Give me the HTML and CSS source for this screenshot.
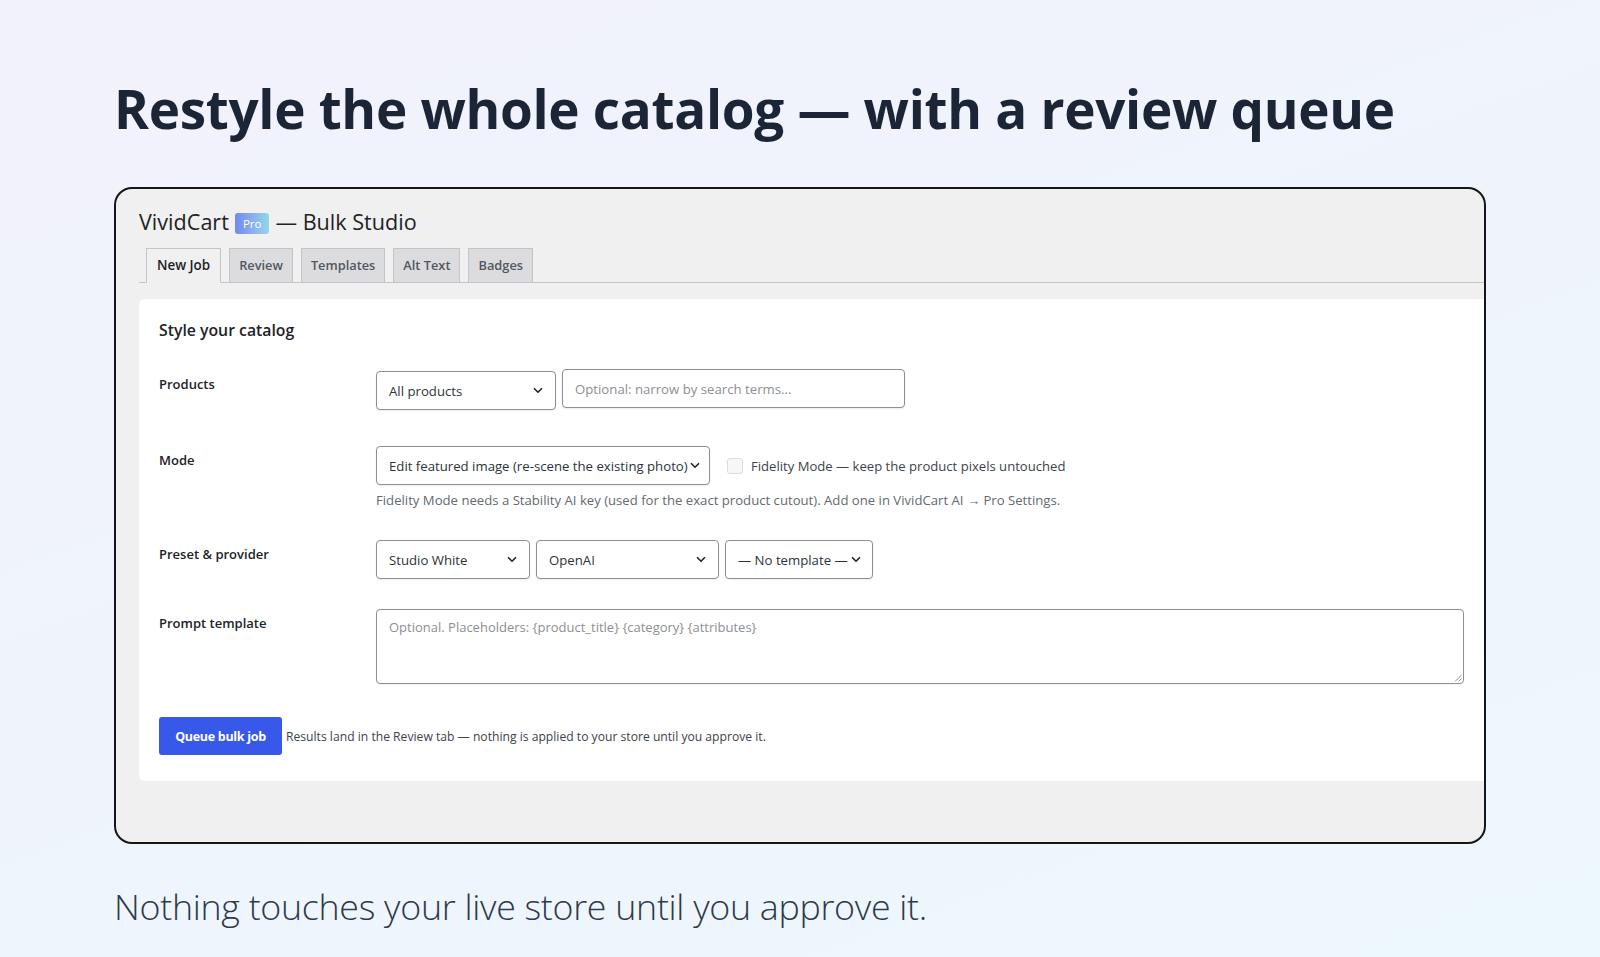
FILE: index.html
```html
<!DOCTYPE html>
<html lang="en">
<head>
<meta charset="utf-8">
<title>VividCart — Bulk Studio</title>
<link rel="stylesheet" href="styles.css">
</head>
<body>
<main class="page">
  <h1 class="hero-title">Restyle the whole catalog — with a review queue</h1>

  <section class="window">
    <h2 class="app-title">VividCart <span class="pro-badge">Pro</span> — Bulk Studio</h2>

    <nav class="tabs">
      <span class="tab tab-active">New Job</span>
      <span class="tab">Review</span>
      <span class="tab">Templates</span>
      <span class="tab">Alt Text</span>
      <span class="tab">Badges</span>
    </nav>

    <div class="panel">
      <h3 class="panel-title">Style your catalog</h3>

      <div class="row row-products">
        <div class="label">Products</div>
        <div class="controls">
          <div class="select select-products">
            <span class="select-text">All products</span>
            <svg class="chev" width="10" height="7" viewBox="0 0 10 7"><path d="M1 1.2 5 5.2 9 1.2" fill="none" stroke="#1d2327" stroke-width="1.6"/></svg>
          </div>
          <div class="input input-search">Optional: narrow by search terms...</div>
        </div>
      </div>

      <div class="row row-mode">
        <div class="label">Mode</div>
        <div class="controls-col">
          <div class="controls">
            <div class="select select-mode">
              <span class="select-text">Edit featured image (re-scene the existing photo)</span>
              <svg class="chev" width="10" height="7" viewBox="0 0 10 7"><path d="M1 1.2 5 5.2 9 1.2" fill="none" stroke="#1d2327" stroke-width="1.6"/></svg>
            </div>
            <label class="check">
              <span class="checkbox"></span>
              <span class="check-text">Fidelity Mode — keep the product pixels untouched</span>
            </label>
          </div>
          <p class="hint">Fidelity Mode needs a Stability AI key (used for the exact product cutout). Add one in VividCart AI → Pro Settings.</p>
        </div>
      </div>

      <div class="row row-preset">
        <div class="label">Preset &amp; provider</div>
        <div class="controls">
          <div class="select select-preset">
            <span class="select-text">Studio White</span>
            <svg class="chev" width="10" height="7" viewBox="0 0 10 7"><path d="M1 1.2 5 5.2 9 1.2" fill="none" stroke="#1d2327" stroke-width="1.6"/></svg>
          </div>
          <div class="select select-provider">
            <span class="select-text">OpenAI</span>
            <svg class="chev" width="10" height="7" viewBox="0 0 10 7"><path d="M1 1.2 5 5.2 9 1.2" fill="none" stroke="#1d2327" stroke-width="1.6"/></svg>
          </div>
          <div class="select select-template">
            <span class="select-text">— No template —</span>
            <svg class="chev" width="10" height="7" viewBox="0 0 10 7"><path d="M1 1.2 5 5.2 9 1.2" fill="none" stroke="#1d2327" stroke-width="1.6"/></svg>
          </div>
        </div>
      </div>

      <div class="row row-prompt">
        <div class="label">Prompt template</div>
        <div class="textarea">
          <span class="placeholder">Optional. Placeholders: {product_title} {category} {attributes}</span>
          <svg class="grip" width="8" height="8" viewBox="0 0 8 8"><path d="M7.5 1 1 7.5M7.5 4.5 4.5 7.5" fill="none" stroke="#8c8f94" stroke-width="1"/></svg>
        </div>
      </div>

      <div class="actions">
        <button class="btn-primary" type="button">Queue bulk job</button>
        <span class="actions-note">Results land in the Review tab — nothing is applied to your store until you approve it.</span>
      </div>
    </div>
  </section>

  <p class="tagline">Nothing touches your live store until you approve it.</p>
</main>
</body>
</html>
```

FILE: styles.css
```css
html, body {
  margin: 0;
  padding: 0;
}

body {
  width: 1600px;
  height: 957px;
  overflow: hidden;
  background: linear-gradient(160deg, #f2f2fc 0%, #eff4fc 50%, #edf8fd 100%);
  font-family: "Open Sans", "Noto Sans", "Liberation Sans", sans-serif;
  color: #1d2327;
}

.page {
  padding: 73px 0 0 114px;
}

.hero-title {
  margin: 0;
  font-size: 53px;
  line-height: 72px;
  font-weight: 700;
  letter-spacing: -0.3px;
  color: #1c2536;
}

.window {
  margin-top: 42px;
  width: 1372px;
  height: 657px;
  box-sizing: border-box;
  border: 2px solid #161616;
  border-radius: 18px;
  background: #f0f0f1;
  overflow: hidden;
  padding: 18px 0 0 23px;
}

.app-title {
  margin: 0;
  font-size: 21.6px;
  line-height: 29px;
  font-weight: 400;
  color: #1d2327;
  display: flex;
  align-items: center;
  gap: 6px;
}

.pro-badge {
  display: inline-block;
  font-size: 11.5px;
  line-height: 21px;
  padding: 0 8px;
  border-radius: 3px;
  color: #fff;
  background: linear-gradient(90deg, #7088ee 0%, #8cb2ec 55%, #92d8e6 100%);
  margin: 4px 0 0 0;
}

.tabs {
  margin-top: 12px;
  display: flex;
  gap: 8px;
  padding-left: 7px;
  border-bottom: 1px solid #c3c4c7;
}

.tab {
  display: block;
  height: 33px;
  line-height: 33px;
  padding: 0 9px;
  font-size: 12.8px;
  font-weight: 600;
  color: #50575e;
  background: #dcdcde;
  border: 1px solid #c3c4c7;
  border-bottom: none;
}

.tab-active {
  background: #f0f0f1;
  color: #1d2327;
  border-bottom: 1px solid #f0f0f1;
  margin-bottom: -1px;
  font-size: 13.4px;
  padding: 0 10px;
}

.panel {
  margin-top: 16px;
  margin-right: -12px;
  height: 482px;
  box-sizing: border-box;
  background: #fff;
  border-radius: 6px 0 0 6px;
  padding: 20px 20px 0 20px;
}

.panel-title {
  margin: 0 0 28px 0;
  font-size: 15.8px;
  line-height: 22px;
  font-weight: 600;
  color: #1d2327;
}

.row {
  display: flex;
  align-items: flex-start;
}

.label {
  width: 217px;
  flex: none;
  font-size: 13px;
  line-height: 18px;
  font-weight: 600;
  color: #1d2327;
  padding-top: 5px;
}

.row-products .label { padding-top: 6px; }

.row-mode { margin-top: 36px; }
.row-preset { margin-top: 31px; }
.row-prompt { margin-top: 30px; }

.controls {
  display: flex;
  align-items: flex-start;
  gap: 6px;
}

.controls-col {
  display: flex;
  flex-direction: column;
}

.select, .input {
  box-sizing: border-box;
  height: 39px;
  border: 1px solid #8c8f94;
  border-radius: 4px;
  background: #fff;
  display: flex;
  align-items: center;
  font-size: 13.2px;
  color: #2c3338;
  box-shadow: 0 1px 2px rgba(0, 0, 0, 0.08);
  white-space: nowrap;
}

.select {
  justify-content: space-between;
  padding: 0 12px 0 12px;
  gap: 2px;
}

.chev { flex: none; }

.select-products { width: 180px; margin-top: 2px; }
.input-search { width: 343px; padding-left: 12px; color: #8c8f94; }

.select-mode { width: 334px; padding-right: 11px; }
.select-preset { width: 154px; }
.select-provider { width: 183px; }
.select-template { width: 148px; padding-right: 11px; }

.check {
  display: flex;
  align-items: center;
  height: 39px;
  margin-left: 11px;
  gap: 8px;
}

.checkbox {
  display: block;
  width: 14px;
  height: 14px;
  border: 1px solid #dcdcde;
  border-radius: 3px;
  background: #f6f7f7;
}

.check-text {
  font-size: 13.1px;
  color: #3c434a;
}

.hint {
  margin: 6px 0 0 0;
  font-size: 13.15px;
  line-height: 18px;
  color: #646970;
}

.textarea {
  position: relative;
  box-sizing: border-box;
  width: 1088px;
  height: 75px;
  border: 1px solid #8c8f94;
  border-radius: 4px;
  background: #fff;
  padding: 5px 12px;
  box-shadow: 0 1px 2px rgba(0, 0, 0, 0.06);
}

.placeholder {
  font-size: 13px;
  line-height: 18px;
  color: #8c8f94;
}

.grip {
  position: absolute;
  right: 1px;
  bottom: 1px;
}

.actions {
  margin-top: 33px;
  display: flex;
  align-items: center;
  gap: 4px;
}

.btn-primary {
  box-sizing: border-box;
  width: 123px;
  height: 38px;
  border: none;
  border-radius: 3px;
  background: #3858e9;
  color: #fff;
  font-family: inherit;
  font-size: 12.5px;
  font-weight: 700;
  letter-spacing: -0.3px;
  padding: 0;
}

.actions-note {
  font-size: 12.15px;
  color: #3c434a;
}

.tagline {
  margin: 40px 0 0 0;
  font-size: 35.8px;
  line-height: 44px;
  font-weight: 300;
  color: #2f3a4c;
  letter-spacing: -0.3px;
}
```
